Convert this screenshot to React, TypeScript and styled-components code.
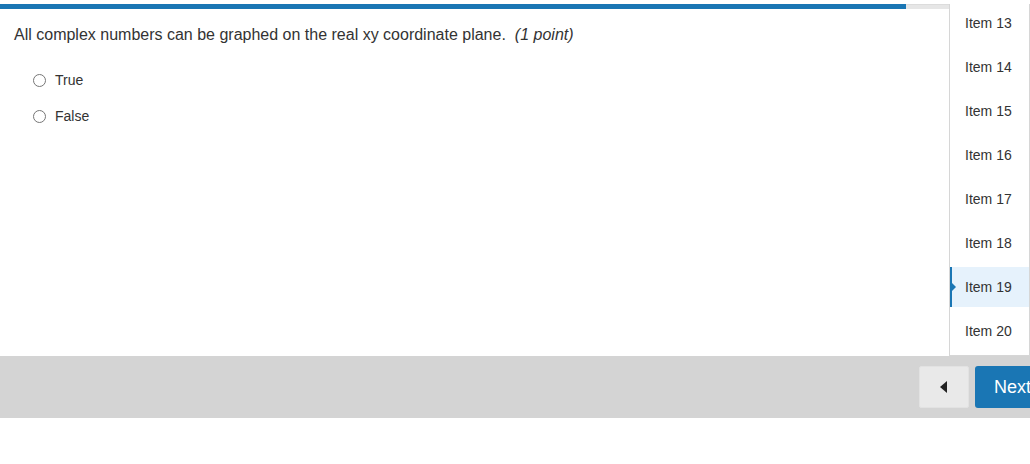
import React from "react";
import styled, { createGlobalStyle } from "styled-components";

const GlobalStyle = createGlobalStyle`
  html, body {
    margin: 0;
    padding: 0;
    background: #ffffff;
    font-family: "Liberation Sans", Arial, sans-serif;
    color: #333333;
  }
`;

const Page = styled.div`
  width: 1030px;
  height: 464px;
  overflow: hidden;
  position: relative;
`;

const Main = styled.div`
  height: 356px;
  padding-top: 4px;
  box-sizing: border-box;
  position: relative;
`;

const Progress = styled.div`
  height: 5px;
  width: 1000px;
  background: #e6e6e6;
  border-top: 1px solid #dcdcdc;
  box-sizing: border-box;
  display: flex;
`;

const ProgressFill = styled.div<{ pct: number }>`
  height: 5px;
  margin-top: -1px;
  background: #1a76b4;
  width: ${({ pct }) => pct}%;
`;

const Question = styled.div`
  padding: 17px 14px 0;
`;

const Prompt = styled.p`
  margin: 0;
  font-size: 16px;
  line-height: 18px;
  color: #333333;

  em {
    margin-left: 9px;
  }
`;

const Options = styled.div`
  display: flex;
  flex-direction: column;
  gap: 16px;
  padding: 26px 0 0 19px;
`;

const Option = styled.label`
  display: flex;
  align-items: center;
  gap: 9px;
  font-size: 14px;
  line-height: 20px;
  color: #333333;
`;

const Radio = styled.span`
  width: 11px;
  height: 11px;
  border: 1px solid #767676;
  border-radius: 50%;
  background: #ffffff;
`;

const ItemMenu = styled.div`
  position: absolute;
  top: 4px;
  left: 949px;
  width: 81px;
  height: 352px;
  box-sizing: border-box;
  background: #ffffff;
  border: 1px solid #d6d6d6;
  border-top: none;
  overflow: hidden;
`;

const ItemList = styled.ul`
  list-style: none;
  margin: -1px 0 0;
  padding: 0;
  display: flex;
  flex-direction: column;
  gap: 4px;
`;

const Item = styled.li<{ active?: boolean }>`
  position: relative;
  height: 40px;
  display: flex;
  align-items: center;
  padding-left: 13px;
  font-size: 14px;
  color: #333333;
  background: ${({ active }) => (active ? "#e6f2fc" : "transparent")};
  border-left: 3px solid ${({ active }) => (active ? "#1a76b4" : "transparent")};
  margin-left: -1px;

  &::before {
    content: "";
    display: ${({ active }) => (active ? "block" : "none")};
    position: absolute;
    left: 0;
    top: 16px;
    border-top: 4px solid transparent;
    border-bottom: 4px solid transparent;
    border-left: 4px solid #1a76b4;
  }
`;

const Footer = styled.div`
  height: 62px;
  background: #d4d4d4;
  display: flex;
  align-items: center;
  justify-content: flex-end;
  gap: 6px;
`;

const PrevButton = styled.button`
  width: 50px;
  height: 42px;
  border: 1px solid #e2e2e2;
  background: #e9e9e9;
  border-radius: 2px;
  display: flex;
  align-items: center;
  justify-content: center;
  padding: 0;
`;

const NextButton = styled.button`
  width: 80px;
  height: 42px;
  margin-right: -25px;
  border: none;
  border-radius: 3px;
  background: #1a76b4;
  color: #ffffff;
  font-family: "Liberation Sans", Arial, sans-serif;
  font-size: 18px;
  text-align: left;
  padding: 0 0 0 19px;
`;

const items = [13, 14, 15, 16, 17, 18, 19, 20];

export default function App() {
  return (
    <Page>
      <GlobalStyle />
      <Main>
        <Progress>
          <ProgressFill pct={90.6} />
        </Progress>
        <Question>
          <Prompt>
            All complex numbers can be graphed on the real xy coordinate plane.
            <em>(1 point)</em>
          </Prompt>
          <Options>
            <Option>
              <Radio />
              True
            </Option>
            <Option>
              <Radio />
              False
            </Option>
          </Options>
        </Question>
        <ItemMenu>
          <ItemList>
            {items.map((n) => (
              <Item key={n} active={n === 19}>
                Item {n}
              </Item>
            ))}
          </ItemList>
        </ItemMenu>
      </Main>
      <Footer>
        <PrevButton aria-label="Previous">
          <svg width="8" height="12" viewBox="0 0 8 12">
            <polygon points="7,0 7,12 0,6" fill="#222" />
          </svg>
        </PrevButton>
        <NextButton>Next</NextButton>
      </Footer>
    </Page>
  );
}
